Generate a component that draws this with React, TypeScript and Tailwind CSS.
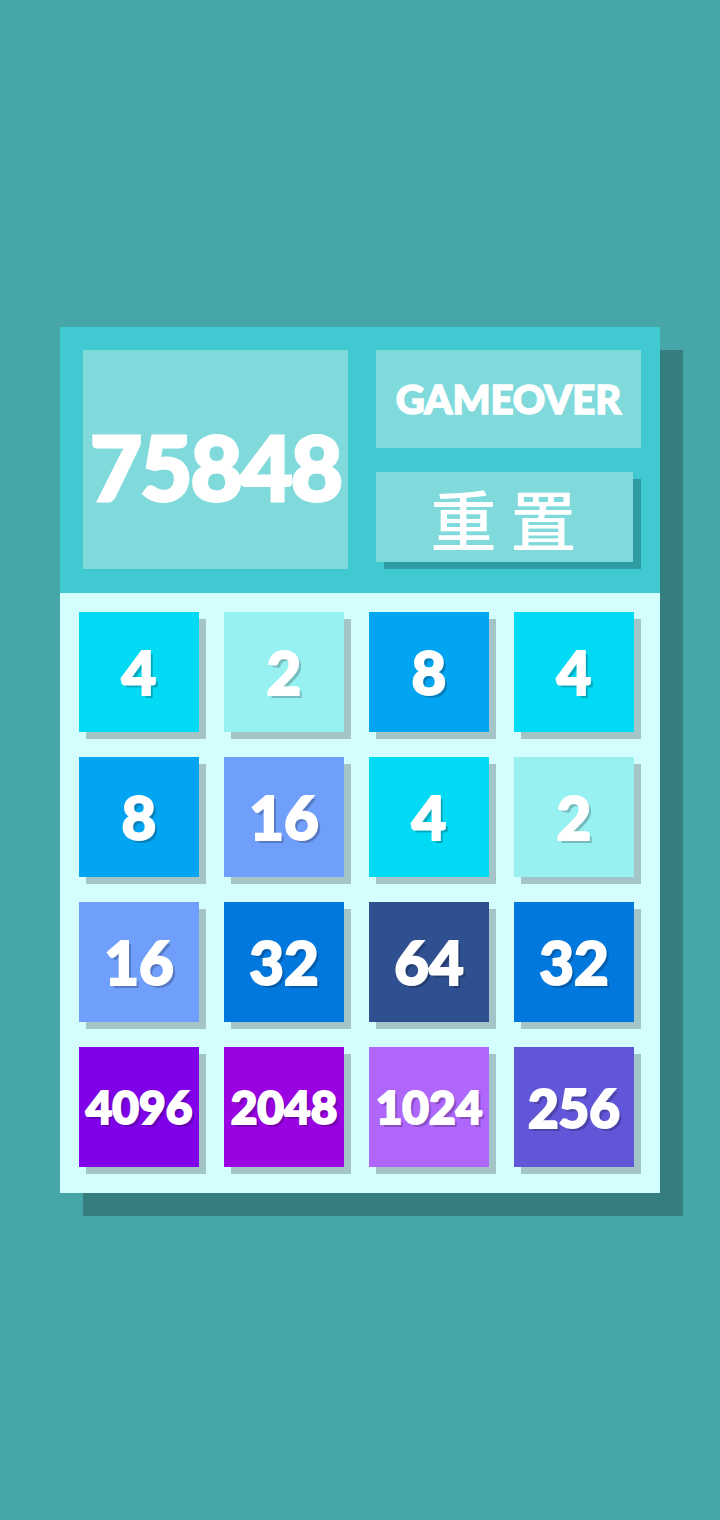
const BOARD: number[][] = [
  [4, 2, 8, 4],
  [8, 16, 4, 2],
  [16, 32, 64, 32],
  [4096, 2048, 1024, 256],
];

const TILE_BG: Record<number, string> = {
  2: "bg-[#98f1f1]",
  4: "bg-[#00daf4]",
  8: "bg-[#02a5f1]",
  16: "bg-[#6f9efb]",
  32: "bg-[#0078de]",
  64: "bg-[#2e4f90]",
  256: "bg-[#6156d8]",
  1024: "bg-[#b065fb]",
  2048: "bg-[#9a02e2]",
  4096: "bg-[#8001e8]",
};

function tileTextSize(value: number) {
  if (value >= 1000) return "text-[46px] tracking-[0px]";
  if (value >= 100) return "text-[53px] tracking-[0px]";
  return "text-[60px] tracking-[0px]";
}

function Tile({ value }: { value: number }) {
  return (
    <div
      className={`w-[120px] h-[120px] flex items-center justify-center shadow-[7px_7px_0_#a3c5c7] ${TILE_BG[value]}`}
    >
      <span
        className={`font-['Lato',sans-serif] font-black text-white leading-none [-webkit-text-stroke:2px_#ffffff] [text-shadow:3px_3px_0_rgba(0,0,0,0.22)] ${tileTextSize(value)}`}
      >
        {value}
      </span>
    </div>
  );
}

export default function App() {
  return (
    <div className="min-h-[1520px] w-full bg-[#47a6a8] pt-[327px] pl-[60px]">
      <div className="w-[600px] shadow-[23px_23px_0_#357e7f]">
        {/* score + status header */}
        <div className="h-[266px] bg-[#40c9d1] pt-[23px] pl-[23px] pr-[19px] flex gap-[28px]">
          <div className="w-[265px] h-[219px] bg-[#80dadc] flex items-center justify-center pt-[12px]">
            <span className="font-['Lato',sans-serif] font-black text-white text-[90px] leading-none tracking-[-2px] [-webkit-text-stroke:3px_#ffffff]">
              75848
            </span>
          </div>
          <div className="w-[265px] flex flex-col gap-[24px]">
            <div className="h-[98px] bg-[#80dadc] flex items-center justify-center">
              <span className="font-['Lato',sans-serif] font-black text-white text-[40px] leading-none tracking-[0px] [-webkit-text-stroke:1.5px_#ffffff]">
                GAMEOVER
              </span>
            </div>
            <button
              type="button"
              className="w-[257px] h-[90px] bg-[#80dadc] shadow-[8px_7px_0_#2e9ca2] flex items-center justify-center pl-[12px]"
            >
              <span className="font-['Noto_Sans_CJK_SC',sans-serif] font-medium text-white text-[66px] leading-none tracking-[14px]">
                重置
              </span>
            </button>
          </div>
        </div>

        {/* board */}
        <div className="h-[600px] bg-[#d4fdfd] pt-[19px] pl-[19px]">
          <div className="grid grid-cols-[repeat(4,120px)] gap-[25px]">
            {BOARD.flat().map((v, i) => (
              <Tile key={i} value={v} />
            ))}
          </div>
        </div>
      </div>
    </div>
  );
}
